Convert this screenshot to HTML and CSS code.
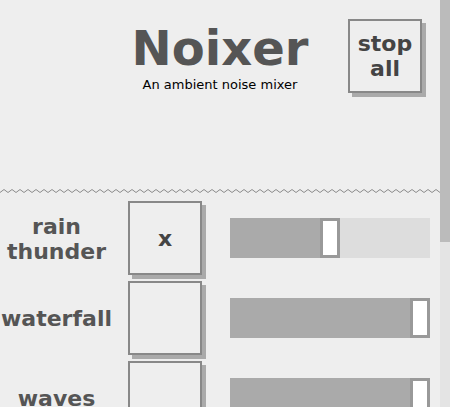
FILE: index.html
```html
<!DOCTYPE html>
<html>
<head>
<meta charset="utf-8">
<link rel="stylesheet" href="styles.css">
</head>
<body>
<div class="page">
  <header class="header">
    <div class="brand">
      <h1 class="title">Noixer</h1>
      <p class="subtitle">An ambient noise mixer</p>
    </div>
    <button class="btn stop">stop<br>all</button>
  </header>
  <svg class="zigzag" width="440" height="6" aria-hidden="true">
    <defs>
      <pattern id="zz" width="8" height="6" patternUnits="userSpaceOnUse">
        <polyline points="0,4.5 4,1.5 8,4.5" fill="none" stroke="#8a8a8a" stroke-width="1"/>
      </pattern>
    </defs>
    <rect x="0" y="0" width="440" height="6" fill="url(#zz)"/>
  </svg>
  <div class="rows">
    <div class="row">
      <div class="label">rain<br>thunder</div>
      <button class="btn toggle">x</button>
      <div class="slider"><div class="fill" style="width:90px"></div><div class="thumb"></div></div>
    </div>
    <div class="row">
      <div class="label">waterfall</div>
      <button class="btn toggle"></button>
      <div class="slider"><div class="fill" style="width:180px"></div><div class="thumb"></div></div>
    </div>
    <div class="row">
      <div class="label">waves</div>
      <button class="btn toggle"></button>
      <div class="slider"><div class="fill" style="width:180px"></div><div class="thumb"></div></div>
    </div>
  </div>
</div>
<div class="scrollbar"><div class="scroll-thumb"></div></div>
</body>
</html>
```
FILE: styles.css
```css
html, body {
  margin: 0;
  padding: 0;
  background: #eeeeee;
  overflow: hidden;
}
body {
  font-family: "DejaVu Sans", Verdana, sans-serif;
  color: #555555;
}
.page {
  width: 440px;
}
.header {
  display: grid;
  grid-template-columns: 1fr auto 1fr;
  align-items: start;
  height: 188px;
}
.brand {
  grid-column: 2;
  text-align: center;
  padding-top: 20px;
}
.title {
  margin: 0;
  font-size: 48px;
  line-height: 56px;
  font-weight: bold;
  color: #555555;
}
.subtitle {
  margin: 1px 0 0;
  font-size: 13px;
  line-height: 15px;
  color: #000000;
}
.btn {
  box-sizing: border-box;
  background: #eeeeee;
  border: 2px solid #888888;
  box-shadow: 4px 4px 0 #aaaaaa;
  font-family: "DejaVu Sans", Verdana, sans-serif;
  font-weight: bold;
  color: #444444;
  padding: 0;
  margin: 0;
}
.stop {
  grid-column: 3;
  justify-self: end;
  margin: 19px 18px 0 0;
  width: 74px;
  height: 74px;
  font-size: 22px;
  line-height: 25px;
}
.zigzag {
  display: block;
  height: 6px;
}
.rows {
  display: flex;
  flex-direction: column;
  padding-top: 4px;
}
.row {
  display: flex;
  align-items: center;
  height: 80px;
}
.label {
  width: 113px;
  text-align: center;
  font-weight: bold;
  font-size: 22px;
  line-height: 25px;
  padding-top: 1px;
}
.toggle {
  width: 74px;
  height: 74px;
  margin-left: 15px;
  font-size: 22px;
}
.slider {
  margin-left: 28px;
  width: 200px;
  height: 40px;
  background: #dddddd;
  display: flex;
}
.fill {
  height: 40px;
  background: #aaaaaa;
}
.thumb {
  box-sizing: border-box;
  width: 20px;
  height: 40px;
  background: #ffffff;
  border: 3px solid #999999;
}
.scrollbar {
  position: fixed;
  top: 0;
  right: 0;
  width: 10px;
  height: 407px;
  background: #e4e4e4;
}
.scroll-thumb {
  height: 242px;
  background: #bbbbbb;
}
```
